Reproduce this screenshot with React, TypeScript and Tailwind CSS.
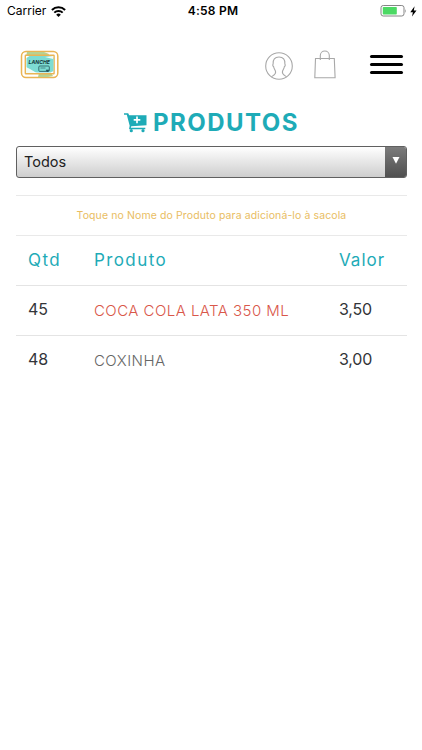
import React from "react";

const products = [
  { qty: 45, name: "COCA COLA LATA 350 ML", price: "3,50", active: true },
  { qty: 48, name: "COXINHA", price: "3,00", active: false },
];

const StatusBar = () => (
  <div className="flex h-[22px] items-center justify-between pl-[7px] pr-[5px] text-black">
    <div className="flex w-[120px] items-center gap-[5px]">
      <span className="text-[12px] leading-none">Carrier</span>
      <svg width="15" height="11" viewBox="0 0 15 11" fill="none" stroke="#000" strokeWidth="2">
        <path d="M.9 4a9.4 9.4 0 0 1 13.2 0" />
        <path d="M3.3 6.6a6 6 0 0 1 8.4 0" />
        <path d="M7.5 11 5.2 8.7a3.3 3.3 0 0 1 4.6 0z" fill="#000" stroke="none" />
      </svg>
    </div>
    <span className="pl-[2px] text-[12px] leading-none font-semibold tracking-[0.25px]">4:58 PM</span>
    <div className="flex w-[120px] items-center justify-end gap-[3px]">
      <svg width="27" height="12" viewBox="0 0 27 12">
        <rect x="1" y=".5" width="23" height="10.5" rx="2.2" fill="#fff" stroke="#858585" />
        <rect x="2.8" y="2" width="14" height="7.5" rx=".7" fill="#4cd964" />
        <path d="M25.3 4v4q1.5-2 0-4z" fill="#858585" />
      </svg>
      <svg width="7" height="11" viewBox="0 0 7 11">
        <path d="M4.6.3.3 6.2h2.6L2 10.6l4.5-6H3.8z" fill="#000" />
      </svg>
    </div>
  </div>
);

const Logo = () => (
  <svg width="39" height="29" viewBox="0 0 39 29">
    <rect x="1.5" y="1.5" width="36.3" height="26" rx="4.5" fill="#fff" stroke="#e9b454" strokeWidth="1.5" />
    <path d="M7 2h17l5 2-1 3H6zM19 23h12l2 3-5 1H18z" fill="#b8d191" />
    <rect x="5.3" y="5.3" width="28.8" height="18.5" rx=".5" fill="#fff" stroke="#e9b454" strokeWidth="1.4" />
    <path d="M6.5 8l3-2h22l2 2v13l-3 1.5H17l-5-1-5.5-3z" fill="#7ddcd3" />
    <path d="M6 17l4 2 5 3-3 1H6zM25 7l8-1v3z" fill="#effbf8" />
    <text x="8.5" y="13.8" fontSize="5.4" fontWeight="700" fontStyle="italic" textLength="21.5" lengthAdjust="spacingAndGlyphs" fill="#163b40">
      LANCHE
    </text>
    <rect x="18.8" y="16" width="10.5" height="5.4" rx="1" fill="none" stroke="#23545a" strokeWidth=".8" />
    <path d="M20.5 18h5M26 20h3l-1.5 2z" fill="#23545a" stroke="#23545a" strokeWidth=".6" />
  </svg>
);

const UserIcon = () => (
  <svg width="28" height="28" viewBox="0 0 28 28" fill="none" stroke="#a8a8a8" strokeWidth="1.1">
    <circle cx="14" cy="14" r="13.3" />
    <path d="M6.4 24.8C8.5 23.2 11 22.3 10.6 19.8 10.3 17.8 8.8 17 8.6 14.5c-1-.6-1-1.8-.5-2.4C7.7 7.4 9.8 5 14 5s6.3 2.4 5.9 7.1c.5.6.5 1.8-.5 2.4-.2 2.5-1.7 3.3-2 5.3-.4 2.5 2.1 3.4 4.2 5" />
  </svg>
);

const BagIcon = () => (
  <svg width="22" height="29" viewBox="0 0 22 29" fill="none" stroke="#a8a8a8" strokeWidth="1.1">
    <path d="M1.5 8.5h18.8l.8 19.2H.8z" />
    <path d="M6.3 10V5.5a4.5 4.5 0 0 1 9 0V10" />
  </svg>
);

const CartIcon = () => (
  <svg width="23" height="20" viewBox="0 0 23 20" fill="#1eabb7">
    <path d="M0 .3h4.2l1 1.9h17.3v10L7.3 13.2l-.5 1.6h14.5v1.4H5l.7-3.4-2.9-11H0z" />
    <circle cx="7.3" cy="17.7" r="1.6" />
    <circle cx="19" cy="17.7" r="1.6" />
    <path d="M13 3.6v6.6M9.7 6.9h6.6" stroke="#fff" strokeWidth="1.7" />
  </svg>
);

export default function App() {
  return (
    <div className="h-[750px] w-[422px] overflow-hidden bg-white font-['Inter','Liberation_Sans',sans-serif]">
      <StatusBar />

      <header className="flex h-[84px] items-center justify-between pl-[20px] pr-[19px]">
        <div className="pt-[1px]">
          <Logo />
        </div>
        <div className="flex items-center">
          <div className="pt-[3px]">
            <UserIcon />
          </div>
          <div className="ml-[21px] mr-[34px] pt-[1px]">
            <BagIcon />
          </div>
          <div className="flex w-[33px] flex-col gap-[5px]">
            <span className="h-[3px] rounded-full bg-black" />
            <span className="h-[3px] rounded-full bg-black" />
            <span className="h-[3px] rounded-full bg-black" />
          </div>
        </div>
      </header>

      <main className="pl-[16px] pr-[15px]">
        <h1 className="flex h-[34px] items-center justify-center gap-[6px] text-[24px] font-bold text-[#1eabb7]">
          <CartIcon />
          <span className="whitespace-nowrap tracking-[1.5px]">PRODUTOS</span>
        </h1>

        <div className="mt-[6px] flex h-[32px] overflow-hidden rounded-[3px] border border-[#606060] bg-linear-to-b from-white to-[#cecece]">
          <span className="flex-1 pl-[7px] text-[14.5px] leading-[30px] text-[#222]">Todos</span>
          <span className="flex w-[21px] justify-center bg-linear-to-b from-[#7c7c7c] to-[#505050] pt-[10px]">
            <svg width="8" height="7" viewBox="0 0 8 7">
              <path d="M.5 0h7L4 6.8z" fill="#fff" />
            </svg>
          </span>
        </div>

        <div className="mt-[17px] border-y border-[#e9e9e9]">
          <p className="h-[39px] whitespace-nowrap text-center text-[10.5px] leading-[39px] tracking-[0.11px] text-[#e9bd62]">
            Toque no Nome do Produto para adicioná-lo à sacola
          </p>
        </div>

        <div className="grid h-[49px] grid-cols-[66px_245px_1fr] items-center pl-[12px] text-[17px] tracking-[1.4px] text-[#1eabb7]">
          <span>Qtd</span>
          <span>Produto</span>
          <span className="tracking-[1px]">Valor</span>
        </div>
        {products.map((p) => (
          <div
            key={p.name}
            className="grid h-[50px] grid-cols-[66px_245px_1fr] items-center border-t border-[#e4e4e4] pb-[3px] pl-[12px] text-[16px] text-[#333539]"
          >
            <span>{p.qty}</span>
            <span className={`whitespace-nowrap pt-[5px] text-[15px] font-light tracking-[0.45px] ${p.active ? "text-[#d9574a]" : "text-[#666]"}`}>
              {p.name}
            </span>
            <span className="tracking-[-0.2px]">{p.price}</span>
          </div>
        ))}
      </main>
    </div>
  );
}
